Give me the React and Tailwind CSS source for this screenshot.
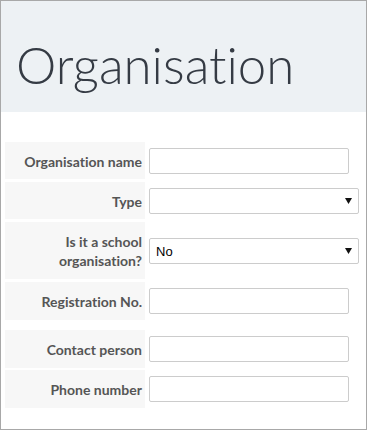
import { useState } from "react";

const FONT = { fontFamily: "Lato, 'Open Sans', sans-serif" };

function Label({ children, tall }) {
  return (
    <div
      className={`w-[140px] shrink-0 bg-[#f7f7f7] flex items-center justify-end text-right pr-[3px] text-[14px] font-bold leading-[19px] text-[#555] ${
        tall ? "h-[57px]" : "h-full"
      }`}
    >
      <span className="pt-[1px]">{children}</span>
    </div>
  );
}

function TextField({ name, value, onChange }) {
  return (
    <input
      type="text"
      name={name}
      value={value}
      onChange={onChange}
      className="ml-[4px] w-[200px] h-[26px] border border-[#cccccc] rounded-[2px] bg-white px-[5px] text-[13px] outline-none"
      style={{ fontFamily: "'Liberation Sans', Arial, sans-serif" }}
    />
  );
}

function SelectField({ name, value, onChange, options }) {
  return (
    <div className="relative ml-[4px] w-[210px] h-[26px]">
      <select
        name={name}
        value={value}
        onChange={onChange}
        className="appearance-none w-full h-full border border-[#cccccc] rounded-[2px] bg-white pl-[6px] pr-[20px] text-[13px] text-black outline-none"
        style={{ fontFamily: "'Liberation Sans', Arial, sans-serif" }}
      >
        {options.map((o) => (
          <option key={o} value={o}>
            {o}
          </option>
        ))}
      </select>
      {/* arrow */}
      <svg
        className="pointer-events-none absolute right-[7px] top-[10px]"
        width="7"
        height="6"
        viewBox="0 0 7 6"
      >
        <path d="M0 0 H7 L3.5 6 Z" fill="#111" />
      </svg>
    </div>
  );
}

function Row({ label, children, tall, className = "" }) {
  return (
    <div className={`flex items-center ${tall ? "h-[57px]" : "h-[38px]"} ${className}`}>
      <Label tall={tall}>{label}</Label>
      {children}
    </div>
  );
}

export default function App() {
  const [org, setOrg] = useState({
    name: "",
    type: "",
    school: "No",
    registration: "",
    contact: "",
    phone: "",
  });

  const handleChange = (e) => {
    const { name, value } = e.target;
    setOrg({ ...org, [name]: value });
  };

  return (
    <div
      className="w-[367px] h-[430px] border border-[#a8a8a8] bg-white overflow-hidden [font-variant-ligatures:none]"
      style={FONT}
    >
      <div className="h-[111px] bg-[#edf1f4] pl-[15px] pt-[38px]">
        <h1 className="text-[51px] font-light leading-[51px] text-[#353b44]">
          Organisation
        </h1>
      </div>

      <form className="pt-[30px] px-[4px]">
        <Row label="Organisation name" className="!h-[37px]">
          <TextField name="name" value={org.name} onChange={handleChange} />
        </Row>
        <Row label="Type" className="mt-[3px] !h-[37px]">
          <SelectField
            name="type"
            value={org.type}
            onChange={handleChange}
            options={["", "Charity", "Company", "Club"]}
          />
        </Row>
        <Row
          tall
          className="mt-[3px]"
          label={
            <>
              Is it a school
              <br />
              organisation?
            </>
          }
        >
          <SelectField
            name="school"
            value={org.school}
            onChange={handleChange}
            options={["No", "Yes"]}
          />
        </Row>
        <Row label="Registration No." className="mt-[3px]">
          <TextField
            name="registration"
            value={org.registration}
            onChange={handleChange}
          />
        </Row>

        <Row label="Contact person" className="mt-[10px]">
          <TextField name="contact" value={org.contact} onChange={handleChange} />
        </Row>
        <Row label="Phone number" className="mt-[2px]">
          <TextField name="phone" value={org.phone} onChange={handleChange} />
        </Row>
      </form>
    </div>
  );
}
